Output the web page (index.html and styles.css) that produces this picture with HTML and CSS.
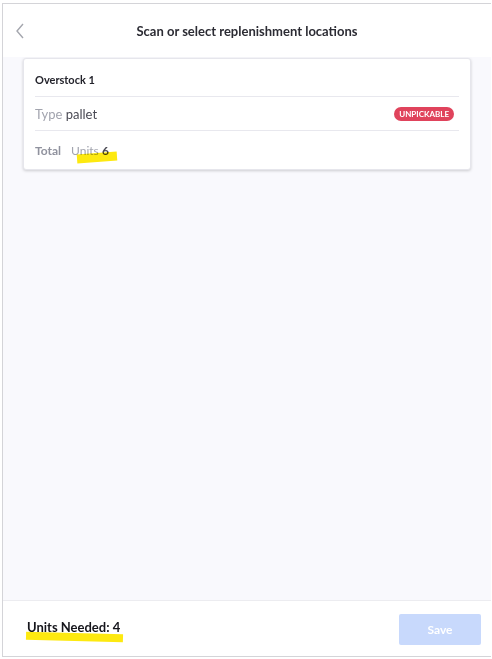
FILE: index.html
```html
<!DOCTYPE html>
<html lang="en">

<head>
    <meta charset="UTF-8">
    <meta name="viewport" content="width=device-width, initial-scale=1.0">
    <title>Replenishment Locations</title>
    <link rel="stylesheet" href="styles.css">
</head>

<body>
    <div class="frame">
        <header class="top-bar">
            <button class="back-button" aria-label="Back">
                <svg width="10" height="16" viewBox="0 0 10 16">
                    <path d="M8 1 L2 8 L8 15" fill="none" stroke="#a4a6ae" stroke-width="1.4" />
                </svg>
            </button>
            <h1>Scan or select replenishment locations</h1>
        </header>

        <main class="content">
            <div class="location-card">
                <div class="card-row card-title">Overstock 1</div>
                <div class="card-row">
                    <span><span class="label">Type</span> <span class="value">pallet</span></span>
                    <span class="badge">UNPICKABLE</span>
                </div>
                <div class="card-row">
                    <span class="total">Total</span>
                    <span class="marked"><span class="label">Units</span> <span class="value strong">6</span></span>
                </div>
            </div>
        </main>

        <footer class="bottom-bar">
            <span class="needed marked wide">Units Needed: 4</span>
            <button class="save-button" disabled>Save</button>
        </footer>
    </div>
</body>

</html>
```

FILE: styles.css
```css
body {
    margin: 0;
    font-family: Lato, "Open Sans", sans-serif;
    background: #ffffff;
}

.frame {
    box-sizing: border-box;
    width: 489px;
    height: 654px;
    margin: 3px 0 0 2px;
    border: 1px solid #d4d4d8;
    border-right: none;
    display: flex;
    flex-direction: column;
    background: #f9f9fd;
}

.top-bar {
    position: relative;
    height: 53px;
    display: flex;
    align-items: center;
    justify-content: center;
    background: #ffffff;
}

.back-button {
    position: absolute;
    left: 12px;
    top: 19px;
    padding: 0;
    border: none;
    background: none;
}

.top-bar h1 {
    margin: 0;
    font-size: 13px;
    font-weight: bold;
    color: #2c2c34;
}

.content {
    flex: 1;
    padding: 1px 20px 0 20px;
}

.location-card {
    background: #ffffff;
    border: 1px solid #e6e6ec;
    border-radius: 3px;
    box-shadow: 0 1px 3px rgba(0, 0, 0, 0.18);
    padding: 0 11px;
}

.card-row {
    display: flex;
    align-items: center;
    justify-content: space-between;
    height: 33px;
    font-size: 13px;
    border-bottom: 1px solid #e8e8ee;
}

.card-row:last-child {
    justify-content: flex-start;
    gap: 10px;
    height: 38px;
    font-size: 12px;
    border-bottom: none;
}

.card-title {
    height: 38px;
    font-size: 11px;
    font-weight: bold;
    color: #24242c;
    padding-top: 3px;
    box-sizing: border-box;
}

.label {
    color: #a2a4ae;
}

.value {
    color: #4a4a54;
}

.strong {
    font-weight: bold;
}

.total {
    font-weight: bold;
    color: #90929e;
}

.badge {
    background: #e0435c;
    color: #ffffff;
    font-size: 8px;
    font-weight: bold;
    padding: 2px 5px;
    border-radius: 8px;
    margin-right: 5px;
}

.marked {
    position: relative;
}

.marked::after {
    content: "";
    position: absolute;
    left: 6px;
    right: -8px;
    bottom: -4px;
    height: 9px;
    background: #fde910;
    transform: rotate(-4deg);
    mix-blend-mode: multiply;
}

.marked.wide::after {
    left: -1px;
    right: -3px;
    bottom: -6px;
    height: 8px;
    transform: rotate(1.5deg);
}

.bottom-bar {
    height: 55px;
    border-top: 1px solid #ececf0;
    background: #ffffff;
    display: flex;
    align-items: center;
    justify-content: space-between;
    padding: 0 10px 0 24px;
}

.needed {
    font-size: 13px;
    font-weight: bold;
    color: #16161c;
    margin-top: -4px;
}

.save-button {
    width: 82px;
    height: 31px;
    margin-top: 2px;
    border: none;
    border-radius: 2px;
    background: #c8d9fc;
    color: #ffffff;
    font-family: inherit;
    font-size: 12px;
    font-weight: bold;
}
```
